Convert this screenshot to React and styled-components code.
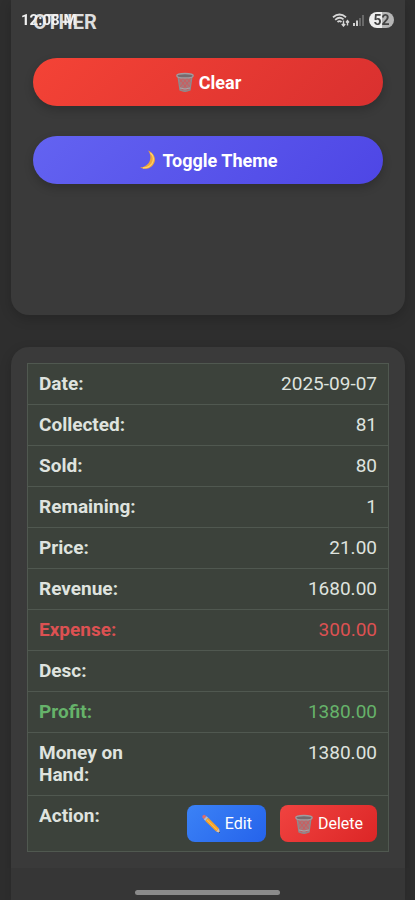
import styled, { createGlobalStyle } from 'styled-components'

const rows = [
    { label: 'Date:', value: '2025-09-07' },
    { label: 'Collected:', value: '81' },
    { label: 'Sold:', value: '80' },
    { label: 'Remaining:', value: '1' },
    { label: 'Price:', value: '21.00' },
    { label: 'Revenue:', value: '1680.00' },
    { label: 'Expense:', value: '300.00', color: '#dc5152' },
    { label: 'Desc:', value: '' },
    { label: 'Profit:', value: '1380.00', color: '#66b36a' },
    { label: 'Money on Hand:', value: '1380.00' },
]

const Trash = () => (
    <Icon viewBox="0 0 20 20" aria-hidden="true">
        <path d="M3 4 L5 18 Q10 20.5 15 18 L17 4 Z" fill="#a8777a" />
        <path d="M4 6 L13 18 M7 5 L15 15 M11 5 L16 11 M16 6 L7 18 M13 5 L5 15 M9 5 L4 11" stroke="#cf5b5c" strokeWidth="0.9" />
        <path d="M3 4 L5 18 Q10 20.5 15 18 L17 4" fill="none" stroke="#8d8b8e" strokeWidth="1.3" />
        <path d="M5 16 Q10 18 15 16" fill="none" stroke="#a9a6a8" strokeWidth="1" />
        <ellipse cx="10" cy="3.7" rx="8.2" ry="2.2" fill="#77696d" stroke="#a09da0" strokeWidth="1.3" />
    </Icon>
)

const Moon = () => (
    <Icon viewBox="0 0 20 20" aria-hidden="true">
        <path d="M10 0.5 C16 3 18.3 8.5 16.2 13 C13.8 18.3 8 20.3 2 17.6 C6.5 17.4 10.3 14.8 11.8 10.8 C13 7.2 12.4 3.6 10 0.5 Z" fill="#f0a63a" />
        <path d="M12.4 2.8 C16 6 16.2 10.5 13.8 13.8 C11.5 16.8 8 18 5 17.8" fill="none" stroke="#ffd36c" strokeWidth="1.2" />
    </Icon>
)

const Pencil = () => (
    <Icon viewBox="0 0 20 20" aria-hidden="true">
        <path d="M1.2 3.3 Q1 1.2 3.3 0.8 L5.6 2.3 L2.8 5.3 Z" fill="#df6d69" />
        <path d="M2.8 5.3 L5.6 2.3 L7.2 3.8 L4.3 6.9 Z" fill="#b6bcc5" />
        <path d="M4.3 6.9 L7.2 3.8 L18 14.6 L15.2 17.6 Z" fill="#f5a128" />
        <path d="M5.8 5.6 L16.5 16.2" stroke="#ffc45a" strokeWidth="1" />
        <path d="M15.2 17.6 L18 14.6 L19 19 Z" fill="#e8c49b" />
        <path d="M17.6 18.4 L18.7 17.6 L19 19 Z" fill="#333" />
    </Icon>
)

const App = () => {
    return (
        <Page>
            <GlobalStyle />
            <StatusBar>
                <Clock>12:08 M</Clock>
                <Signals>
                    <svg width="18" height="14" viewBox="0 0 18 14" aria-hidden="true">
                        <path d="M1 4.2 Q7.5 -1.2 14 4.2 M3.2 6.8 Q7.5 3 11.5 6.4 M5.5 9 Q7.5 7.2 9.5 9" fill="none" stroke="#d6d6d6" strokeWidth="1.8" />
                        <path d="M11.5 7.5 V12.5 M9.8 11 L11.5 13 L13.2 11 M15.5 12.5 V8 M14 9.5 L15.5 7.7 L17 9.5" fill="none" stroke="#d6d6d6" strokeWidth="1.4" />
                    </svg>
                    <svg width="12" height="12" viewBox="0 0 12 12" aria-hidden="true">
                        <path d="M1 9 H3 V12 H1 Z M4 6.5 H6 V12 H4 Z" fill="#d0d0d0" />
                        <path d="M7 4 H9 V12 H7 Z M10 1 H12 V12 H10 Z" fill="#696969" />
                    </svg>
                    <Battery>52</Battery>
                </Signals>
            </StatusBar>

            <OtherPanel>
                <Heading>OTHER</Heading>
                <WideButton type="button" $from="#f44336" $to="#d9302f"><Trash />Clear</WideButton>
                <WideButton type="button" $from="#6363f1" $to="#4e46e5"><Moon />Toggle Theme</WideButton>
            </OtherPanel>

            <RecordPanel>
                <RecordTable>
                    <tbody>
                        {rows.map((row) => (
                            <Row key={row.label} $color={row.color}>
                                <Label scope="row">{row.label}</Label>
                                <Value>{row.value}</Value>
                            </Row>
                        ))}
                        <Row>
                            <Label scope="row">Action:</Label>
                            <Value>
                                <Actions>
                                    <SmallButton type="button" $from="#3b82f6" $to="#2563eb"><Pencil />Edit</SmallButton>
                                    <SmallButton type="button" $from="#f04340" $to="#dc2626"><Trash />Delete</SmallButton>
                                </Actions>
                            </Value>
                        </Row>
                    </tbody>
                </RecordTable>
            </RecordPanel>

            <NavBar><HomeHandle /></NavBar>
        </Page>
    )
}

export default App

const GlobalStyle = createGlobalStyle`
* {
box-sizing: border-box;
}
body {
margin: 0;
background-color: #2e2e2e;
color: #dfe3df;
font-family: Roboto, sans-serif;
}
`

const Page = styled.main`
display: flex;
flex-direction: column;
gap: 32px;
min-height: 100vh;
padding: 0 10px 0 11px;
`

const StatusBar = styled.header`
position: fixed;
top: 0;
left: 0;
right: 0;
display: flex;
justify-content: space-between;
align-items: center;
height: 40px;
padding: 0 21px;
`

const Clock = styled.span`
color: #f2f2f2;
font-size: 15px;
font-weight: 700;
`

const Signals = styled.div`
display: flex;
align-items: center;
gap: 2px;
`

const Battery = styled.span`
width: 25px;
margin-left: 3px;
border-radius: 8px;
background: linear-gradient(90deg, #ededed 52%, #b5b5b5 52%);
color: #444;
font-size: 14px;
font-weight: 700;
line-height: 16px;
text-align: center;
`

const OtherPanel = styled.section`
display: flex;
flex-direction: column;
gap: 30px;
min-height: 315px;
padding: 10px 22px;
border-radius: 0 0 18px 18px;
background-color: #3a3a3a;
box-shadow: 0 4px 12px rgba(0, 0, 0, 0.18);
`

const Heading = styled.h2`
margin: 0 0 -6px;
color: #dedede;
font-size: 20px;
font-weight: 700;
line-height: 24px;
`

const Icon = styled.svg`
width: 20px;
height: 20px;
flex-shrink: 0;
`

const WideButton = styled.button`
display: flex;
justify-content: center;
align-items: center;
gap: 4px;
height: 48px;
border: 0;
border-radius: 24px;
background: linear-gradient(135deg, ${(props) => props.$from}, ${(props) => props.$to});
box-shadow: 0 4px 10px rgba(0, 0, 0, 0.2);
color: white;
font-family: inherit;
font-size: 18px;
font-weight: 700;
`

const RecordPanel = styled.section`
flex: 1;
padding: 16px 16px 46px;
border-radius: 18px 18px 0 0;
background-color: #3a3a3a;
box-shadow: 0 4px 12px rgba(0, 0, 0, 0.18);
`

const RecordTable = styled.table`
width: 100%;
border: 1px solid #505850;
border-collapse: collapse;
background-color: #3c423b;
font-size: 19px;
line-height: 22px;
`

const Row = styled.tr`
border-bottom: 1px solid #505850;
color: ${(props) => props.$color || 'inherit'};
vertical-align: top;
`

const Label = styled.th`
width: 36%;
padding: 9px 11px;
font-weight: 700;
text-align: left;
`

const Value = styled.td`
height: 41px;
padding: 9px 11px;
text-align: right;
`

const Actions = styled.div`
display: flex;
justify-content: flex-end;
gap: 14px;
`

const SmallButton = styled.button`
display: flex;
align-items: center;
gap: 4px;
height: 37px;
padding: 0 14px;
border: 0;
border-radius: 8px;
background: linear-gradient(135deg, ${(props) => props.$from}, ${(props) => props.$to});
color: white;
font-family: inherit;
font-size: 16px;
`

const NavBar = styled.footer`
position: fixed;
right: 0;
bottom: 0;
left: 0;
display: flex;
justify-content: center;
height: 32px;
padding-top: 22px;
background-color: rgba(48, 48, 48, 0.3);
`

const HomeHandle = styled.div`
width: 35%;
height: 5px;
border-radius: 3px;
background-color: #8b8b8b;
`
